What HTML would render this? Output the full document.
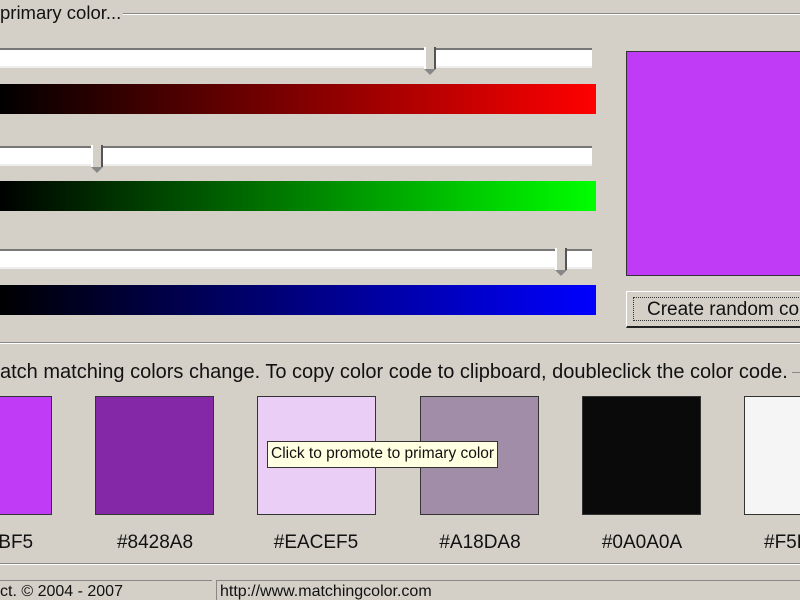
<!DOCTYPE html>
<html><head><meta charset="utf-8"><style>
html{overflow:hidden}
body{margin:0;width:800px;height:600px;background:#d4d0c8;position:relative;overflow:hidden;font-family:"Liberation Sans",sans-serif;color:#111}
.a{position:absolute}
.track{position:absolute;left:-2px;width:594px;height:20px;background:#fff;border-top:2px solid #777;border-bottom:2px solid #eee;box-sizing:border-box}
.grad{position:absolute;left:-2px;width:598px;height:30px}
.thumb{position:absolute;width:12px;height:22px;background:#d4d0c8;border-left:2px solid #fff;border-right:2px solid #555;box-sizing:border-box}
.thumb:after{content:"";position:absolute;left:-2px;top:22px;border-left:6px solid transparent;border-right:6px solid transparent;border-top:6px solid #888}
.sw{position:absolute;top:396px;width:119px;height:119px;border:1px solid #333;box-sizing:border-box}
.lb{position:absolute;top:532px;font-size:19px;width:160px;text-align:center}
</style></head><body>
<div class="a" style="left:0;top:2px;font-size:18.5px">primary color...</div>
<div class="a" style="left:123px;top:13px;width:677px;height:1px;background:#888;border-bottom:1px solid #fff"></div>

<div class="track" style="top:48px"></div>
<div class="thumb" style="left:424px;top:47px"></div>
<div class="grad" style="top:84px;background:linear-gradient(90deg,#000,#f00)"></div>

<div class="track" style="top:146px"></div>
<div class="thumb" style="left:91px;top:145px"></div>
<div class="grad" style="top:181px;background:linear-gradient(90deg,#000,#0f0)"></div>

<div class="track" style="top:249px"></div>
<div class="thumb" style="left:555px;top:248px"></div>
<div class="grad" style="top:285px;background:linear-gradient(90deg,#000,#00f)"></div>

<div class="a" style="left:626px;top:51px;width:174px;height:225px;background:#bf3bf5;border:1px solid #333;border-right:none;box-sizing:border-box"></div>
<div class="a" style="left:626px;top:291px;width:174px;height:37px;border:1px solid #fff;border-right:none;border-bottom:2px solid #222;box-sizing:border-box;background:#d4d0c8;overflow:hidden">
 <div class="a" style="left:6px;top:5px;right:-5px;bottom:5px;border:1px dotted #333"></div>
 <div class="a" style="left:20px;top:7px;font-size:19px;white-space:nowrap">Create random co</div>
</div>
<div class="a" style="left:0;top:342px;width:800px;height:1px;background:#888;border-bottom:1px solid #fff"></div>

<div class="a" style="left:0;top:361px;width:800px;overflow:hidden;font-size:20px;white-space:nowrap">atch matching colors change. To copy color code to clipboard, doubleclick the color code.</div>
<div class="a" style="left:792px;top:372px;width:8px;height:1px;background:#888"></div>

<div class="sw" style="left:-67px;background:#bf3bf5"></div>
<div class="sw" style="left:95px;background:#8428a8"></div>
<div class="sw" style="left:257px;background:#eacef5"></div>
<div class="sw" style="left:420px;background:#a18da8"></div>
<div class="sw" style="left:582px;background:#0a0a0a"></div>
<div class="sw" style="left:744px;width:56px;border-right:none;background:#f5f5f5"></div>

<div class="a" style="left:267px;top:441px;height:25px;background:#ffffe1;border:1px solid #333;font-size:15.5px;line-height:24px;padding:0 3px;white-space:nowrap">Click to promote to primary color</div>

<div class="lb" style="left:-87px">#BF3BF5</div>
<div class="lb" style="left:75px">#8428A8</div>
<div class="lb" style="left:236px">#EACEF5</div>
<div class="lb" style="left:400px">#A18DA8</div>
<div class="lb" style="left:562px">#0A0A0A</div>
<div class="a" style="left:764px;top:532px;width:36px;overflow:hidden;font-size:19px;white-space:nowrap">#F5F5F5</div>

<div class="a" style="left:0;top:563px;width:800px;height:1px;background:#888;border-bottom:1px solid #fff"></div>
<div class="a" style="left:0;top:580px;width:212px;height:20px;border-top:1px solid #888;font-size:16px;line-height:22px;white-space:nowrap;overflow:hidden">ct. © 2004 - 2007</div>
<div class="a" style="left:216px;top:580px;width:584px;height:20px;border-top:1px solid #888;border-left:1px solid #888;font-size:16px;line-height:22px;padding-left:3px;box-sizing:border-box;overflow:hidden">http://www.matchingcolor.com</div>
</body></html>
